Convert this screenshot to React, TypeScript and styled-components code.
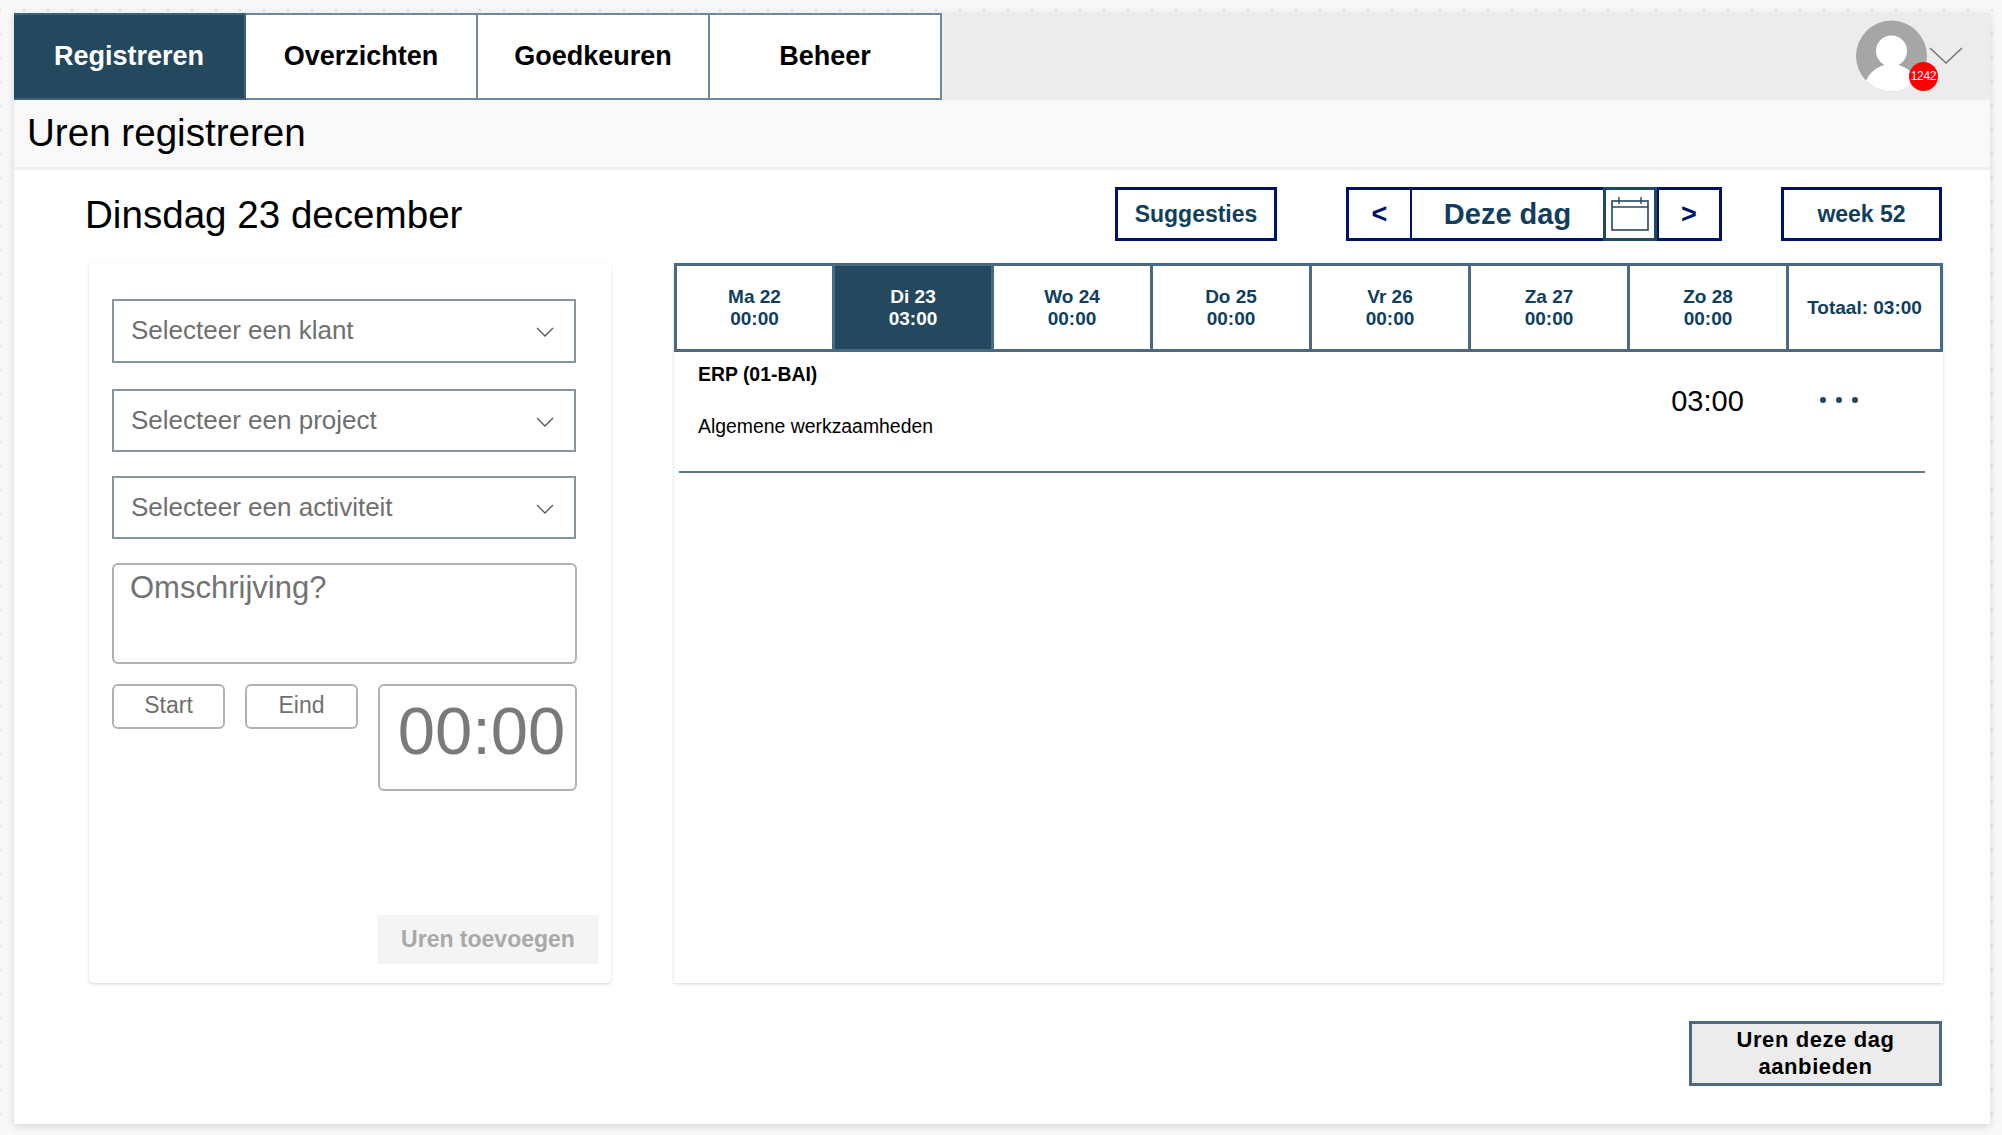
import React from 'react';
import styled, { createGlobalStyle } from 'styled-components';

const tabs = ['Registreren', 'Overzichten', 'Goedkeuren', 'Beheer'];

const days = [
  { label: 'Ma 22', time: '00:00' },
  { label: 'Di 23', time: '03:00', active: true },
  { label: 'Wo 24', time: '00:00' },
  { label: 'Do 25', time: '00:00' },
  { label: 'Vr 26', time: '00:00' },
  { label: 'Za 27', time: '00:00' },
  { label: 'Zo 28', time: '00:00' },
];

const selects = ['Selecteer een klant', 'Selecteer een project', 'Selecteer een activiteit'];

function Chevron() {
  return (
    <ChevronIcon viewBox="0 0 18 10">
      <polyline points="1,1 9,9 17,1" fill="none" stroke="#555" strokeWidth="1.3" />
    </ChevronIcon>
  );
}

function App() {
  return (
    <>
      <GlobalStyle />
      <Frame>
        <TopBar>
          <TabList>
            {tabs.map((tab) => (
              <Tab key={tab} $active={tab === 'Registreren'}>{tab}</Tab>
            ))}
          </TabList>
          <UserMenu>
            <Avatar viewBox="0 0 71 72">
              <defs>
                <clipPath id="avatar-clip">
                  <circle cx="35.5" cy="36" r="35.5" />
                </clipPath>
              </defs>
              <circle cx="35.5" cy="36" r="35.5" fill="#a6a6a6" />
              <g clipPath="url(#avatar-clip)" fill="#fff">
                <circle cx="35.5" cy="31" r="15.5" />
                <ellipse cx="35.5" cy="72" rx="28" ry="28" />
              </g>
            </Avatar>
            <Badge>1242</Badge>
            <UserChevron viewBox="0 0 34 18">
              <polyline points="1,1 17,16 33,1" fill="none" stroke="#777" strokeWidth="1.6" />
            </UserChevron>
          </UserMenu>
        </TopBar>

        <TitleBar>Uren registreren</TitleBar>

        <Workspace>
          <HeaderRow>
            <DayTitle>Dinsdag 23 december</DayTitle>
            <SuggestButton>Suggesties</SuggestButton>
            <DayNav>
              <NavArrow>&lt;</NavArrow>
              <TodayButton>Deze dag</TodayButton>
              <CalendarButton aria-label="Kalender">
                <svg width="38" height="34" viewBox="0 0 38 34">
                  <rect x="1" y="4" width="36" height="29" fill="none" stroke="#24485d" strokeWidth="1.6" />
                  <line x1="1" y1="10" x2="37" y2="10" stroke="#24485d" strokeWidth="1.6" />
                  <line x1="8" y1="0" x2="8" y2="7" stroke="#24485d" strokeWidth="1.4" />
                  <line x1="30" y1="0" x2="30" y2="7" stroke="#24485d" strokeWidth="1.4" />
                </svg>
              </CalendarButton>
              <NavArrow>&gt;</NavArrow>
            </DayNav>
            <WeekButton>week 52</WeekButton>
          </HeaderRow>

          <Columns>
            <FormPanel>
              <FormStack>
                {selects.map((label) => (
                  <SelectBox key={label}>
                    {label}
                    <Chevron />
                  </SelectBox>
                ))}
                <Description placeholder="Omschrijving?" />
                <TimeRow>
                  <TimeButton>Start</TimeButton>
                  <TimeButton>Eind</TimeButton>
                  <TimerBox>00:00</TimerBox>
                </TimeRow>
              </FormStack>
              <AddButton disabled>Uren toevoegen</AddButton>
            </FormPanel>

            <HoursPanel>
              <DayStrip>
                {days.map((day) => (
                  <DayCell key={day.label} $active={day.active}>
                    <span>{day.label}</span>
                    <span>{day.time}</span>
                  </DayCell>
                ))}
                <TotalCell>Totaal: 03:00</TotalCell>
              </DayStrip>
              <EntryRow>
                <EntryText>
                  <EntryProject>ERP (01-BAI)</EntryProject>
                  <EntryActivity>Algemene werkzaamheden</EntryActivity>
                </EntryText>
                <EntryTime>03:00</EntryTime>
                <EntryMenu aria-label="Meer">
                  <Dot />
                  <Dot />
                  <Dot />
                </EntryMenu>
              </EntryRow>
            </HoursPanel>
          </Columns>

          <FooterRow>
            <SubmitButton>Uren deze dag aanbieden</SubmitButton>
          </FooterRow>
        </Workspace>
      </Frame>
    </>
  );
}

const GlobalStyle = createGlobalStyle`
  html, body {
    margin: 0;
    height: 100%;
  }
  body {
    background-color: #f8f8f8;
    background-image: radial-gradient(circle at 1px 1px, #dcdcdc 1px, transparent 1.5px);
    background-size: 24px 24px;
    background-position: -1px 9px;
    font-family: "Liberation Sans", Arial, sans-serif;
    overflow: hidden;
  }
  #root {
    padding: 13px 12px 0 14px;
  }
  button, textarea {
    font-family: inherit;
  }
`;

const Frame = styled.div`
  width: 1976px;
  height: 1111px;
  background: #fff;
  box-shadow: 0 2px 8px rgba(0, 0, 0, 0.14);
`;

const TopBar = styled.header`
  display: flex;
  justify-content: space-between;
  height: 87px;
  background: #ececec;
`;

const TabList = styled.nav`
  display: grid;
  grid-template-columns: repeat(4, 232px);
  width: 928px;
`;

const Tab = styled.div<{ $active?: boolean }>`
  display: flex;
  align-items: center;
  justify-content: center;
  box-sizing: border-box;
  font-size: 27px;
  font-weight: 700;
  color: ${(p) => (p.$active ? '#fff' : '#000')};
  background: ${(p) => (p.$active ? '#24485d' : '#fff')};
  border: 2px solid ${(p) => (p.$active ? '#3f6077' : '#6b8aa1')};
  border-left: 0;
`;

const UserMenu = styled.div`
  position: relative;
  width: 134px;
  height: 87px;
`;

const Avatar = styled.svg`
  position: absolute;
  left: 0;
  top: 7px;
  width: 71px;
  height: 72px;
`;

const Badge = styled.span`
  position: absolute;
  left: 53px;
  top: 49px;
  width: 29px;
  height: 29px;
  border-radius: 50%;
  background: #fe0000;
  color: #fff;
  font-size: 12px;
  line-height: 29px;
  letter-spacing: -0.3px;
  text-align: center;
`;

const UserChevron = styled.svg`
  position: absolute;
  left: 73px;
  top: 34px;
  width: 34px;
  height: 18px;
`;

const TitleBar = styled.h1`
  display: flex;
  align-items: center;
  box-sizing: border-box;
  height: 70px;
  margin: 0;
  padding: 0 0 1px 13px;
  background: #f9f9f9;
  border-bottom: 3px solid #efefef;
  font-size: 38.6px;
  font-weight: 400;
  color: #000;
`;

const Workspace = styled.main`
  padding: 17px 47px 0 75px;
`;

const HeaderRow = styled.div`
  display: flex;
  align-items: center;
  height: 54px;
  margin-bottom: 22px;
  padding-right: 1px;
`;

const DayTitle = styled.h2`
  margin: 1px auto 0 -4px;
  font-size: 38.6px;
  font-weight: 400;
  color: #000;
`;

const OutlineButton = styled.button`
  box-sizing: border-box;
  height: 54px;
  padding: 0;
  background: #fff;
  border: 3px solid #00126b;
  color: #0f3e5e;
  font-size: 23px;
  font-weight: 700;
`;

const SuggestButton = styled(OutlineButton)`
  width: 162px;
  margin-right: 69px;
`;

const WeekButton = styled(OutlineButton)`
  width: 161px;
  margin-left: 59px;
`;

const DayNav = styled.div`
  display: grid;
  grid-template-columns: 66px 191px 54px 65px;
  width: 376px;
`;

const NavArrow = styled(OutlineButton)`
  color: #00126b;
  font-size: 27px;
  &:first-child {
    border-right-width: 2px;
  }
  &:last-child {
    border-left-width: 2px;
  }
`;

const TodayButton = styled(OutlineButton)`
  border-left: 0;
  border-right: 0;
  font-size: 29px;
`;

const CalendarButton = styled(OutlineButton)`
  display: flex;
  align-items: center;
  justify-content: center;
  border-color: #1f4a5c;
  svg {
    display: block;
  }
`;

const Columns = styled.div`
  display: grid;
  grid-template-columns: 522px 1269px;
  gap: 63px;
  height: 720px;
`;

const Panel = styled.section`
  background: #fff;
  border-radius: 4px;
  box-shadow: 0 1px 3px rgba(0, 0, 0, 0.17);
`;

const FormPanel = styled(Panel)`
  display: flex;
  flex-direction: column;
  box-sizing: border-box;
  padding: 36px 12px 19px 23px;
`;

const FormStack = styled.div`
  display: flex;
  flex-direction: column;
  gap: 24px;
  width: 465px;
`;

const SelectBox = styled.div`
  display: flex;
  align-items: center;
  justify-content: space-between;
  box-sizing: border-box;
  width: 464px;
  height: 63px;
  padding: 0 20px 0 17px;
  border: 2px solid #87969e;
  font-size: 26px;
  color: #6f6f6f;
  &:first-child {
    height: 64px;
    margin-bottom: 2px;
    padding-bottom: 2px;
  }
`;

const ChevronIcon = styled.svg`
  width: 18px;
  height: 10px;
  margin-top: 3px;
`;

const Description = styled.textarea`
  display: block;
  box-sizing: border-box;
  width: 100%;
  height: 101px;
  padding: 5px 16px;
  border: 2px solid #b2b2b2;
  border-radius: 6px;
  font-size: 31px;
  resize: none;
  &::placeholder {
    color: #737373;
    opacity: 1;
  }
`;

const TimeRow = styled.div`
  display: grid;
  grid-template-columns: 113px 113px 199px;
  gap: 20px;
  align-items: start;
  margin-top: -4px;
`;

const TimeButton = styled.button`
  height: 45px;
  padding: 0 0 3px;
  background: #fff;
  border: 2px solid #b2b2b2;
  border-radius: 6px;
  font-size: 23px;
  color: #6f6f6f;
`;

const TimerBox = styled.div`
  display: flex;
  align-items: center;
  justify-content: center;
  box-sizing: border-box;
  height: 107px;
  padding: 0 0 14px 8px;
  border: 2px solid #b2b2b2;
  border-radius: 6px;
  font-size: 67px;
  color: #7a7a7a;
`;

const AddButton = styled.button`
  width: 222px;
  height: 49px;
  margin: auto 0 0 auto;
  padding: 0;
  background: #f4f4f4;
  border: 0;
  font-size: 23px;
  font-weight: 700;
  color: #a9a9a9;
`;

const HoursPanel = styled(Panel)`
  border-radius: 0;
`;

const DayStrip = styled.div`
  display: grid;
  grid-template-columns: 158px repeat(6, 159px) 1fr;
  box-sizing: border-box;
  height: 89px;
  border: 3px solid #4a6a84;
`;

const DayCell = styled.div<{ $active?: boolean }>`
  display: flex;
  flex-direction: column;
  align-items: center;
  justify-content: center;
  gap: 1px;
  font-size: 19px;
  font-weight: 700;
  line-height: 21px;
  color: ${(p) => (p.$active ? '#fff' : '#0f3e5e')};
  background: ${(p) => (p.$active ? '#24485d' : '#fff')};
  border-right: 3px solid #4a6a84;
`;

const TotalCell = styled.div`
  display: flex;
  align-items: center;
  justify-content: center;
  font-size: 19px;
  font-weight: 700;
  color: #0f3e5e;
`;

const EntryRow = styled.div`
  display: grid;
  grid-template-columns: 949px 159px 1fr;
  align-items: center;
  box-sizing: border-box;
  height: 121px;
  margin: 0 18px 0 5px;
  padding-bottom: 23px;
  border-bottom: 2px solid #5d7a91;
`;

const EntryText = styled.div`
  display: flex;
  flex-direction: column;
  gap: 31px;
  padding-left: 19px;
`;

const EntryProject = styled.span`
  font-size: 19.4px;
  font-weight: 700;
  line-height: 21px;
  color: #000;
`;

const EntryActivity = styled.span`
  font-size: 19.4px;
  line-height: 21px;
  color: #000;
`;

const EntryTime = styled.span`
  margin-top: 2px;
  font-size: 29px;
  text-align: center;
  color: #000;
`;

const EntryMenu = styled.div`
  display: flex;
  justify-content: center;
  gap: 10px;
  width: 104px;
`;

const Dot = styled.span`
  width: 6px;
  height: 6px;
  border-radius: 50%;
  background: #24485d;
`;

const FooterRow = styled.div`
  display: flex;
  justify-content: flex-end;
  margin-top: 38px;
  padding-right: 1px;
`;

const SubmitButton = styled.button`
  box-sizing: border-box;
  width: 253px;
  height: 65px;
  padding: 0 30px 1px;
  background: #ececec;
  border: 3px solid #4a6a84;
  font-size: 22px;
  font-weight: 700;
  line-height: 27px;
  letter-spacing: 0.6px;
  color: #000;
`;

export default App;
